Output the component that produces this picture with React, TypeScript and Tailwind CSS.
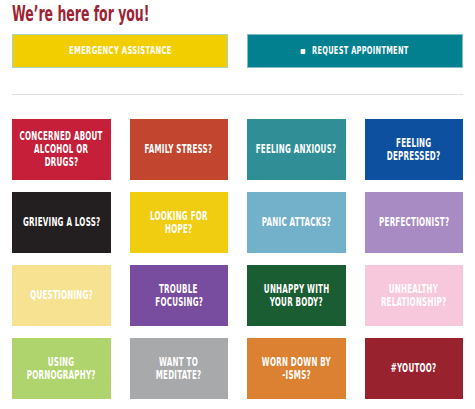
const tiles: { lines: string[]; bg: string }[] = [
  { lines: ["Concerned about", "alcohol or", "drugs?"], bg: "bg-[#c61f3a]" },
  { lines: ["Family stress?"], bg: "bg-[#c2462f]" },
  { lines: ["Feeling anxious?"], bg: "bg-[#2f8e96]" },
  { lines: ["Feeling", "depressed?"], bg: "bg-[#0c509f]" },
  { lines: ["Grieving a loss?"], bg: "bg-[#231f20]" },
  { lines: ["Looking for", "hope?"], bg: "bg-[#f1cd12]" },
  { lines: ["Panic attacks?"], bg: "bg-[#73b0ca]" },
  { lines: ["Perfectionist?"], bg: "bg-[#a98bc3]" },
  { lines: ["Questioning?"], bg: "bg-[#f6e290]" },
  { lines: ["Trouble", "focusing?"], bg: "bg-[#784c9e]" },
  { lines: ["Unhappy with", "your body?"], bg: "bg-[#1b5d33]" },
  { lines: ["Unhealthy", "relationship?"], bg: "bg-[#f7c7dc]" },
  { lines: ["Using", "pornography?"], bg: "bg-[#b0d46d]" },
  { lines: ["Want to", "meditate?"], bg: "bg-[#a8a9ab]" },
  { lines: ["Worn down by", "-isms?"], bg: "bg-[#dc8031]" },
  { lines: ["#YouToo?"], bg: "bg-[#98222e]" },
];

const condensed = "font-['DejaVu_Sans_Condensed','DejaVu_Sans',sans-serif] [font-stretch:condensed] font-bold";

export default function App() {
  return (
    <div className="w-[475px] h-[409px] bg-white px-3 overflow-hidden">
      <h1 className={`${condensed} text-[#9c2333] text-[22px] leading-[28px] whitespace-nowrap`}>
        <span className="inline-block origin-left scale-x-[0.63]">We’re here for you!</span>
      </h1>

      <div className="grid grid-cols-2 gap-[19px] mt-[6px]">
        <button className={`${condensed} h-[34px] bg-[#f2cd00] border border-[#a3d5c9] text-white uppercase text-[11px] tracking-[0.04em] flex items-center justify-center`}>
          <span className="inline-block whitespace-nowrap scale-x-[0.69]">Emergency Assistance</span>
        </button>
        <button className={`${condensed} h-[34px] bg-[#02808f] border border-[#7fc0c8] text-white uppercase text-[11px] tracking-[0.04em] flex items-center justify-center`}>
          <span className="inline-flex items-center gap-[10px] whitespace-nowrap scale-x-[0.67]">
            <span className="inline-block w-[7px] h-[5px] bg-white rounded-[1px]" />
            Request Appointment
          </span>
        </button>
      </div>

      <div className="mt-[26px] h-px bg-[#e3e3e3]" />

      <div className="grid grid-cols-4 gap-x-[19px] gap-y-3 mt-6">
        {tiles.map((t) => (
          <div
            key={t.lines.join(" ")}
            className={`${t.bg} ${condensed} h-[61px] flex flex-col items-center justify-center text-center text-white uppercase text-[12px] leading-[13px] tracking-[0.03em]`}
          >
            {t.lines.map((l) => (
              <span key={l} className="block whitespace-nowrap scale-x-[0.66]">
                {l}
              </span>
            ))}
          </div>
        ))}
      </div>
    </div>
  );
}
